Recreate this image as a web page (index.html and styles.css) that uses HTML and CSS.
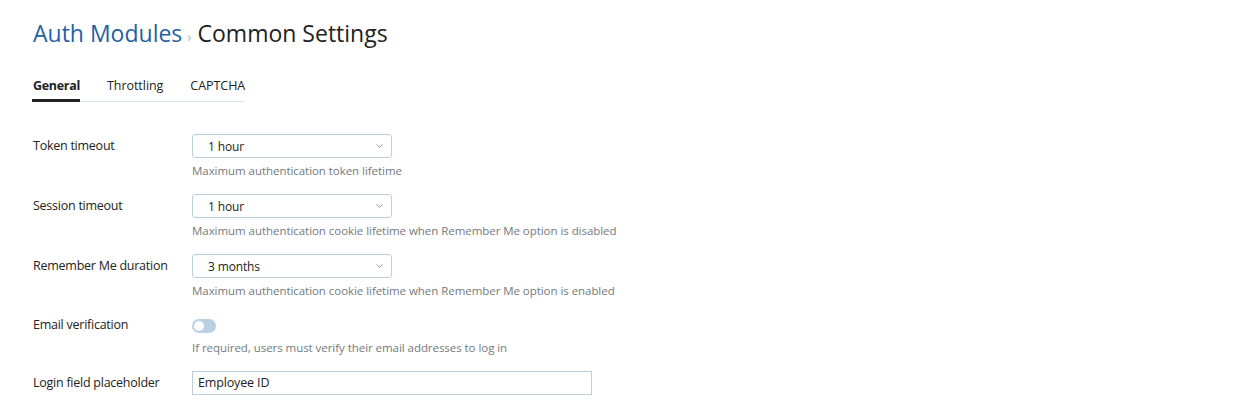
FILE: index.html
```html
<!DOCTYPE html>
<html lang="en">
<head>
<meta charset="utf-8">
<title>Auth Modules › Common Settings</title>
<link rel="stylesheet" href="styles.css">
</head>
<body>
<div class="page">
  <h1 class="title"><a class="crumb" href="#">Auth Modules</a><span class="sep">›</span><span class="current">Common Settings</span></h1>

  <nav class="tabs">
    <a class="tab active" href="#">General</a>
    <a class="tab" href="#">Throttling</a>
    <a class="tab" href="#">CAPTCHA</a>
  </nav>

  <form class="form">
    <div class="row">
      <label class="label">Token timeout</label>
      <div class="field">
        <div class="select"><span>1 hour</span><svg class="chev" width="7" height="4" viewBox="0 0 7 4"><path d="M0.5 0.5 L3.5 3.3 L6.5 0.5" fill="none" stroke="#8a96a3" stroke-width="1"/></svg></div>
        <div class="help">Maximum authentication token lifetime</div>
      </div>
    </div>
    <div class="row">
      <label class="label">Session timeout</label>
      <div class="field">
        <div class="select"><span>1 hour</span><svg class="chev" width="7" height="4" viewBox="0 0 7 4"><path d="M0.5 0.5 L3.5 3.3 L6.5 0.5" fill="none" stroke="#8a96a3" stroke-width="1"/></svg></div>
        <div class="help">Maximum authentication cookie lifetime when Remember Me option is disabled</div>
      </div>
    </div>
    <div class="row">
      <label class="label">Remember Me duration</label>
      <div class="field">
        <div class="select"><span>3 months</span><svg class="chev" width="7" height="4" viewBox="0 0 7 4"><path d="M0.5 0.5 L3.5 3.3 L6.5 0.5" fill="none" stroke="#8a96a3" stroke-width="1"/></svg></div>
        <div class="help">Maximum authentication cookie lifetime when Remember Me option is enabled</div>
      </div>
    </div>
    <div class="row row-toggle">
      <label class="label">Email verification</label>
      <div class="field">
        <div class="toggle-wrap"><span class="toggle"><span class="knob"></span></span></div>
        <div class="help">If required, users must verify their email addresses to log in</div>
      </div>
    </div>
    <div class="row">
      <label class="label">Login field placeholder</label>
      <div class="field">
        <div class="input">Employee ID</div>
      </div>
    </div>
  </form>
</div>
</body>
</html>
```

FILE: styles.css
```css
html, body {
  margin: 0;
  padding: 0;
  background: #ffffff;
}

body {
  font-family: "Open Sans", "Noto Sans", sans-serif;
  color: #222222;
  font-size: 12px;
}

.page {
  padding: 17px 33px 0 33px;
}

.title {
  margin: 0;
  font-size: 23px;
  font-weight: 400;
  line-height: 32px;
  display: flex;
  align-items: baseline;
}

.crumb {
  color: #1f61a3;
  text-decoration: none;
}

.sep {
  color: #b5bcc4;
  font-size: 14px;
  margin: 0 6px 0 5px;
}

.current {
  color: #222222;
}

.tabs {
  display: inline-flex;
  gap: 27px;
  margin-top: 24px;
  border-bottom: 1px solid #dde3ea;
}

.tab {
  font-size: 12.5px;
  line-height: 18px;
  color: #222222;
  text-decoration: none;
  padding-bottom: 4px;
  border-bottom: 3px solid transparent;
  margin-bottom: -1px;
  letter-spacing: -0.05px;
}

.tab.active {
  font-weight: 700;
  border-bottom-color: #222222;
  margin-left: -1px;
  padding: 0 0 4px 1px;
  letter-spacing: -0.3px;
}

.form {
  margin-top: 32px;
}

.row {
  display: flex;
  margin-bottom: 16px;
}

.label {
  width: 159px;
  flex: none;
  font-size: 12.5px;
  line-height: 24px;
  letter-spacing: -0.25px;
}

.field {
  display: flex;
  flex-direction: column;
}

.select {
  box-sizing: border-box;
  width: 200px;
  height: 24px;
  border: 1px solid #bccfe2;
  border-radius: 3px;
  display: flex;
  align-items: center;
  justify-content: space-between;
  padding: 0 8px 0 15px;
  font-size: 12px;
  letter-spacing: -0.15px;
}

.chev {
  display: block;
}

.help {
  margin-top: 5px;
  font-size: 11.5px;
  line-height: 15px;
  color: #737a80;
  letter-spacing: -0.05px;
}

.toggle-wrap {
  height: 21px;
  padding-top: 5px;
  box-sizing: border-box;
}

.toggle {
  display: block;
  width: 24px;
  height: 14px;
  border-radius: 7px;
  background: #b9cfe4;
  position: relative;
}

.knob {
  position: absolute;
  left: 2px;
  top: 2px;
  width: 10px;
  height: 10px;
  border-radius: 50%;
  background: #ffffff;
}

.row-toggle .label {
  line-height: 21px;
}

.input {
  box-sizing: border-box;
  width: 400px;
  height: 24px;
  border: 1px solid #bccfe2;
  padding: 0 5px;
  font-size: 12.5px;
  line-height: 22px;
  letter-spacing: -0.15px;
}
```
